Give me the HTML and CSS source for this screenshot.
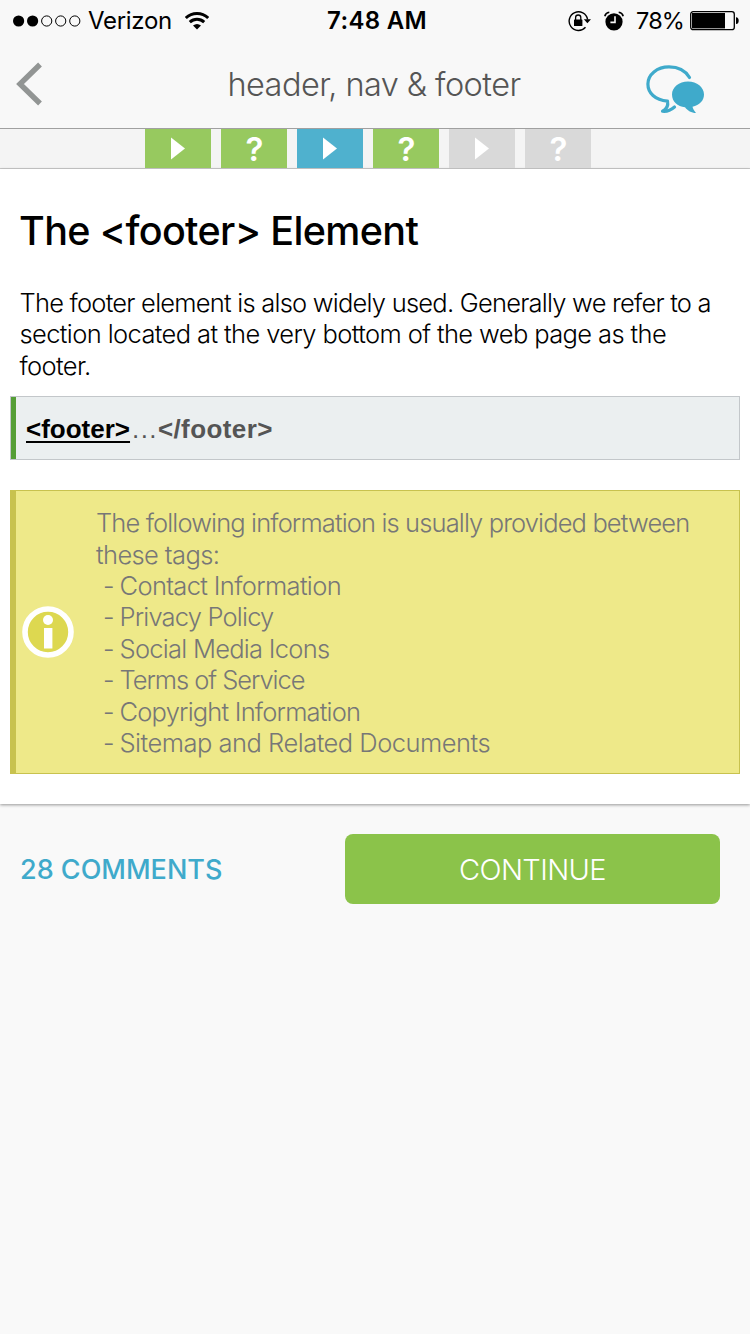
FILE: index.html
```html
<!DOCTYPE html>
<html lang="en">
<head>
<meta charset="utf-8">
<title>header, nav &amp; footer</title>
<link rel="stylesheet" href="styles.css">
</head>
<body>
<header class="top">
  <div class="status">
    <div class="status-left">
      <svg width="68" height="12" viewBox="0 0 68 12"><circle cx="5.6" cy="6" r="5.6"/><circle cx="19.6" cy="6" r="5.6"/><g fill="none" stroke="#000"><circle cx="33.7" cy="6" r="5.1"/><circle cx="47.7" cy="6" r="5.1"/><circle cx="61.8" cy="6" r="5.1"/></g></svg>
      <span class="carrier">Verizon</span>
      <svg class="wifi" width="24" height="18" viewBox="0 0 24 18"><g fill="none" stroke="#000" stroke-width="3"><path d="M.8 6C7 0 17 0 23.200 6"/><path d="M4.800 10.200C9 6.300 15 6.300 19.200 10.200"/></g><path d="M8 13.600Q12 10.400 16 13.600L12 17.600Z"/></svg>
    </div>
    <span class="clock">7:48 AM</span>
    <div class="status-right">
      <svg width="24" height="22" viewBox="0 0 24 22"><path d="M17.500 17.200A9.300 9.300 0 1 1 19.600 9.500" fill="none" stroke="#000" stroke-width="1.400"/><path d="M15.800 9.300H23L19.400 13.200Z"/><rect x="6" y="9.500" width="8.400" height="6.500" rx=".6"/><path d="M7.600 10V7.600a2.600 2.600 0 0 1 5.200 0V10" fill="none" stroke="#000" stroke-width="1.300"/></svg>
      <svg class="alarm" width="20" height="20" viewBox="0 0 20 20"><circle cx="10" cy="10.800" r="8.600"/><path d="M.8 5.200Q1.600 1.800 5.300 1.200M19.200 5.200Q18.400 1.800 14.700 1.200" fill="none" stroke="#000" stroke-width="1.600"/><path d="M11 5.300V11.400H6.400" fill="none" stroke="#f8f8f8" stroke-width="1.600"/></svg>
      <span class="percent">78%</span>
      <svg class="battery" width="50" height="20" viewBox="0 0 50 20"><rect x=".7" y=".7" width="43.600" height="18" rx="2.500" fill="none" stroke="#000" stroke-width="1.300"/><rect x="2" y="2" width="33" height="15.400"/><path d="M46 6.300Q48.700 6.600 48.700 9.700T46 13.100Z"/></svg>
    </div>
  </div>
  <nav class="navbar">
    <svg class="back" width="28" height="44" viewBox="0 0 28 44"><path d="M24 2.500L4 22L24 41.500" fill="none" stroke="#929594" stroke-width="5.400"/></svg>
    <h1 class="title">header, nav &amp; footer</h1>
    <svg class="chat" width="60" height="50" viewBox="0 0 60 50"><path d="M43.500 12.500C39 5 31 1.900 23 1.900C11 1.900 1.900 9.500 1.900 19C1.900 28 9 35 21.500 36.200C22.500 41 21 44 16.500 46.200C21 46.800 25 45 28.500 42" fill="none" stroke="#3faacb" stroke-width="3.200" stroke-linecap="round" stroke-linejoin="round"/><path d="M42 16.500C51 16.500 58 22.300 58 29.400C58 35.500 53.500 40 46.500 41.800C47 44 48 45.500 50 48C45.500 48 41.500 45.500 39 42.200C31.500 41.500 26 36.500 26 29.400C26 22.300 33 16.500 42 16.500Z" fill="#3faacb"/></svg>
  </nav>
</header>
<div class="steps">
  <span class="step done"><svg width="26" height="26"><path d="M6 1.500L20 12.500L6 23.500Z"/></svg></span>
  <span class="step done q">?</span>
  <span class="step current"><svg width="26" height="26"><path d="M6 1.500L20 12.500L6 23.500Z"/></svg></span>
  <span class="step done q">?</span>
  <span class="step"><svg width="26" height="26"><path d="M6 1.500L20 12.500L6 23.500Z"/></svg></span>
  <span class="step q">?</span>
</div>
<main class="lesson">
  <h2 class="heading">The &lt;footer&gt; Element</h2>
  <p class="intro">The footer element is also widely used. Generally we refer to a<br>section located at the very bottom of the web page as the<br>footer.</p>
  <div class="code"><b class="open">&lt;footer&gt;</b><span class="dots">...</span><b class="close">&lt;/footer&gt;</b></div>
  <aside class="note">
    <svg class="info" width="52" height="52" viewBox="0 0 52 52"><circle cx="26" cy="26" r="23" fill="#ddd850" stroke="#fff" stroke-width="5.600"/><circle cx="26" cy="14" r="5" fill="#fff"/><rect x="22" y="22" width="8.400" height="20.500" fill="#fff"/></svg>
    <div class="note-text"><p class="lead">The following information is usually provided between<br>these tags:</p>
      <ul class="list">
        <li><span class="dash">-</span><span class="contact">Contact Information</span></li>
        <li><span class="dash">-</span><span class="privacy">Privacy Policy</span></li>
        <li><span class="dash">-</span><span class="social">Social Media Icons</span></li>
        <li><span class="dash">-</span><span class="terms">Terms of Service</span></li>
        <li><span class="dash">-</span><span class="copyright">Copyright Information</span></li>
        <li><span class="dash">-</span><span class="sitemap">Sitemap and Related Documents</span></li>
      </ul>
    </div>
  </aside>
</main>
<footer class="actions">
  <a class="comments">28 COMMENTS</a>
  <button class="continue">CONTINUE</button>
</footer>
</body>
</html>
```
FILE: styles.css
```css
* { box-sizing: border-box; }
body { margin: 0; min-height: 1334px; background: #f9f9f9; font-family: Inter, "Liberation Sans", sans-serif; font-weight: 300; color: #000; }
svg { display: block; flex: none; }

.top { height: 129px; background: #f8f8f8; border-bottom: 1px solid #a0a0a0; }
.status { height: 40px; display: grid; grid-template-columns: 1fr auto 1fr; align-items: center; padding: 1px 10px 0 13px; font-size: 24px; font-weight: 400; }
.status-left, .status-right { display: flex; align-items: center; }
.status-right { justify-content: flex-end; }
.carrier { margin-left: 7px; letter-spacing: -.3px; }
.wifi { margin-left: 13px; }
.clock { padding-left: 1px; font-weight: 600; letter-spacing: .3px; }
.alarm { margin: 0 12px; }
.percent { font-size: 23.5px; letter-spacing: -.9px; }
.battery { margin-left: 6px; }

.navbar { height: 88px; display: grid; grid-template-columns: 60px 1fr 60px; align-items: center; padding: 0 44px 0 16px; }
.title { margin: 0; padding-left: 26px; font-size: 32.5px; font-weight: 300; letter-spacing: -.57px; color: #555; text-align: center; }
.chat { margin-top: 11px; }

.steps { height: 40px; display: flex; justify-content: center; gap: 10px; padding-right: 14px; background: #f4f4f4; border-bottom: 1px solid #ccc; }
.step { width: 66px; display: flex; align-items: center; justify-content: center; background: #d9d9d9; color: #fff; fill: #fff; }
.q { padding-left: 1px; font: 600 33px Inter, sans-serif; line-height: 38px; }
.done { background: #97c95f; }
.current { background: #4fb1ce; }

.lesson { height: 635px; padding: 0 10px; background: #fff; box-shadow: 0 1px 3px rgba(0,0,0,.4); white-space: nowrap; }
.heading { margin: 0; padding: 38px 9px 0; font-size: 39.5px; line-height: 48px; font-weight: 550; letter-spacing: -.65px; }
.intro { margin: 0; padding: 32px 9.5px 0; font-size: 25.5px; line-height: 31.4px; letter-spacing: -.61px; }
.intro::first-line { letter-spacing: -.77px; }
.code { margin-top: 15px; height: 64px; border: 1px solid #c3c7ca; box-shadow: inset 5px 0 #559e36; background: #ebeff0; padding: 2px 0 0 15px; display: flex; align-items: center; font: 26px "Liberation Sans", sans-serif; color: #555; }
.open { color: #000; text-decoration: underline 2px; text-underline-offset: 3px; text-decoration-skip-ink: none; }
.dots { margin-left: 2px; letter-spacing: 1.4px; }
.close { letter-spacing: .4px; }
.note { margin-top: 30px; height: 284px; border: 1px solid #c8c24e; border-left-width: 6px; background: #eee989; display: flex; align-items: center; padding-left: 6px; color: #777; font-size: 25.5px; line-height: 31.4px; letter-spacing: -.61px; }
.note-text { margin-left: 22px; padding-top: 1px; }
.lead { margin: 0; }
.lead::first-line { letter-spacing: -.87px; }
.list { margin: 0; padding: 0 0 0 7px; list-style: none; }
.list li { display: flex; }
.dash { width: 16.5px; }
.contact { letter-spacing: -.65px; }
.privacy { letter-spacing: -.81px; }
.social { letter-spacing: -.73px; }
.terms { letter-spacing: -1.05px; }
.copyright { letter-spacing: -.8px; }
.sitemap { letter-spacing: -.5px; }

.actions { display: flex; align-items: center; justify-content: space-between; padding: 30px 30px 0 20px; }
.comments { font-size: 27px; font-weight: 500; color: #3faacb; }
.continue { width: 375px; height: 70px; border: 0; border-radius: 8px; background: #8bc34a; color: #fff; font: 300 29px Inter, sans-serif; letter-spacing: -.6px; }
```
